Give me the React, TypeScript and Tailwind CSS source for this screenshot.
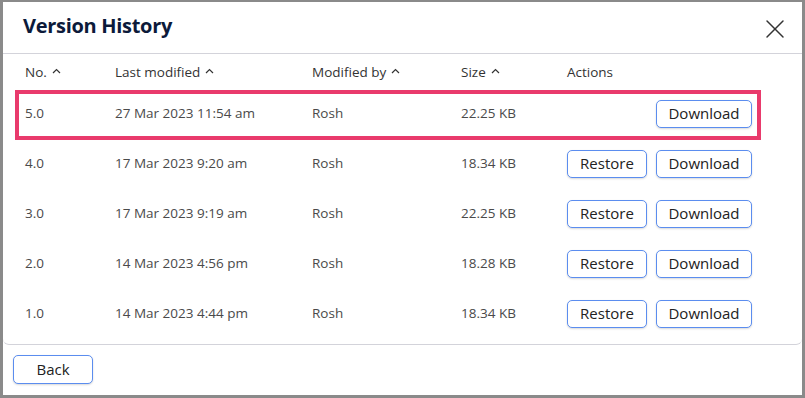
import { X } from "lucide-react";

interface Version {
  no: string;
  modified: string;
  by: string;
  size: string;
  current?: boolean;
}

const versions: Version[] = [
  { no: "5.0", modified: "27 Mar 2023 11:54 am", by: "Rosh", size: "22.25 KB", current: true },
  { no: "4.0", modified: "17 Mar 2023 9:20 am", by: "Rosh", size: "18.34 KB" },
  { no: "3.0", modified: "17 Mar 2023 9:19 am", by: "Rosh", size: "22.25 KB" },
  { no: "2.0", modified: "14 Mar 2023 4:56 pm", by: "Rosh", size: "18.28 KB" },
  { no: "1.0", modified: "14 Mar 2023 4:44 pm", by: "Rosh", size: "18.34 KB" },
];

function SortArrow() {
  return (
    <svg width="9" height="6" viewBox="0 0 9 6" className="ml-[5px] mb-[3px]" fill="none">
      <path d="M1 5L4.5 1.5L8 5" stroke="#333" strokeWidth="1.2" />
    </svg>
  );
}

function OutlineButton({ label, className = "" }: { label: string; className?: string }) {
  return (
    <button
      className={
        "h-[28px] rounded-[5px] border border-[#5b8def] bg-white text-[15px] text-[#222] shadow-[0_1px_2px_rgba(0,0,0,0.15)] " +
        className
      }
    >
      {label}
    </button>
  );
}

const cols = "grid grid-cols-[90px_197px_149px_106px_1fr] items-center";

export default function App() {
  return (
    <div
      className="w-[805px] h-[398px] bg-white border-[3px] border-t-2 border-[#8a8a8a] flex flex-col"
      style={{ fontFamily: '"Open Sans", "Noto Sans", sans-serif' }}
    >
      <div className="h-[52px] flex items-center justify-between pl-[20px] pr-[11px] pb-[3px] border-b border-[#d3d3da]">
        <h1 className="text-[20px] font-bold text-[#0c1a3a] tracking-[-0.3px]">Version History</h1>
        <X size={32} strokeWidth={1.1} className="text-[#333] mt-[5px]" />
      </div>

      <div className="h-[291px] border-b border-[#d3d3da] rounded-b-md">
        <div className={cols + " h-[36px] pt-[1px] ml-[12px] mr-[41px] px-[10px] text-[13.5px] text-[#333]"}>
          <div className="flex items-center">No.<SortArrow /></div>
          <div className="flex items-center">Last modified<SortArrow /></div>
          <div className="flex items-center">Modified by<SortArrow /></div>
          <div className="flex items-center">Size<SortArrow /></div>
          <div>Actions</div>
        </div>

        {versions.map((v) => (
          <div
            key={v.no}
            className={
              cols +
              " h-[50px] ml-[12px] mr-[41px] pl-[6px] pr-[5px] pb-[3px] border-4 text-[13.5px] text-[#4a4a4a] " +
              (v.current ? "border-[#e93a6c]" : "border-transparent")
            }
          >
            <div>{v.no}</div>
            <div>{v.modified}</div>
            <div>{v.by}</div>
            <div>{v.size}</div>
            <div className="flex justify-end gap-[9px]">
              {!v.current && <OutlineButton label="Restore" className="w-[80px]" />}
              <OutlineButton label="Download" className="w-[96px]" />
            </div>
          </div>
        ))}
      </div>

      <div className="pl-[10px] pt-[10px]">
        <OutlineButton label="Back" className="w-[80px] h-[29px]" />
      </div>
    </div>
  );
}
